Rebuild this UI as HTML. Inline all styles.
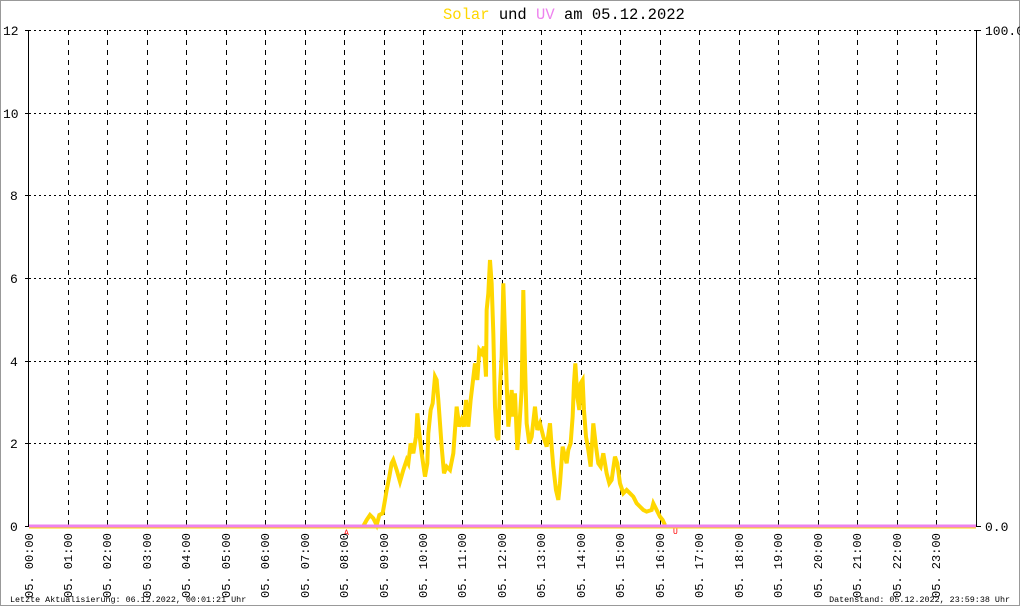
<!DOCTYPE html>
<html><head><meta charset="utf-8"><style>
html,body{margin:0;padding:0;background:#fff}
svg{display:block}
text{font-family:"Liberation Mono",monospace}
</style></head><body>
<svg width="1020" height="606" viewBox="0 0 1020 606" xmlns="http://www.w3.org/2000/svg">
<rect x="0.5" y="0.5" width="1019" height="605" fill="#fff" stroke="#999"/>
<text x="443" y="19" font-size="15.5" fill="#000"><tspan fill="#ffd700">Solar</tspan> und <tspan fill="#ee82ee">UV</tspan> am 05.12.2022</text>
<g stroke="#000" stroke-width="1" stroke-dasharray="2,3">
<line x1="29" x2="976" y1="30.5" y2="30.5"/>
<line x1="29" x2="976" y1="113.5" y2="113.5"/>
<line x1="29" x2="976" y1="195.5" y2="195.5"/>
<line x1="29" x2="976" y1="278.5" y2="278.5"/>
<line x1="29" x2="976" y1="361.5" y2="361.5"/>
<line x1="29" x2="976" y1="443.5" y2="443.5"/>
</g>
<g stroke="#000" stroke-width="1" stroke-dasharray="5,5" id="vg"></g>
<g stroke="#000" stroke-width="1" stroke-dasharray="5,5">
<line x1="68.5" x2="68.5" y1="30" y2="526"/><line x1="107.5" x2="107.5" y1="30" y2="526"/><line x1="147.5" x2="147.5" y1="30" y2="526"/><line x1="186.5" x2="186.5" y1="30" y2="526"/><line x1="226.5" x2="226.5" y1="30" y2="526"/><line x1="265.5" x2="265.5" y1="30" y2="526"/><line x1="305.5" x2="305.5" y1="30" y2="526"/><line x1="344.5" x2="344.5" y1="30" y2="526"/><line x1="384.5" x2="384.5" y1="30" y2="526"/><line x1="423.5" x2="423.5" y1="30" y2="526"/><line x1="462.5" x2="462.5" y1="30" y2="526"/><line x1="502.5" x2="502.5" y1="30" y2="526"/><line x1="541.5" x2="541.5" y1="30" y2="526"/><line x1="581.5" x2="581.5" y1="30" y2="526"/><line x1="620.5" x2="620.5" y1="30" y2="526"/><line x1="660.5" x2="660.5" y1="30" y2="526"/><line x1="699.5" x2="699.5" y1="30" y2="526"/><line x1="739.5" x2="739.5" y1="30" y2="526"/><line x1="778.5" x2="778.5" y1="30" y2="526"/><line x1="818.5" x2="818.5" y1="30" y2="526"/><line x1="857.5" x2="857.5" y1="30" y2="526"/><line x1="897.5" x2="897.5" y1="30" y2="526"/><line x1="936.5" x2="936.5" y1="30" y2="526"/>
</g>
<g stroke="#000" stroke-width="1">
<line x1="28.5" x2="28.5" y1="30" y2="527"/>
<line x1="976.5" x2="976.5" y1="30" y2="527"/>
<line x1="25" x2="29" y1="30.5" y2="30.5"/><line x1="25" x2="29" y1="113.5" y2="113.5"/><line x1="25" x2="29" y1="195.5" y2="195.5"/><line x1="25" x2="29" y1="278.5" y2="278.5"/><line x1="25" x2="29" y1="361.5" y2="361.5"/><line x1="25" x2="29" y1="443.5" y2="443.5"/><line x1="25" x2="29" y1="526.5" y2="526.5"/>
<line x1="976" x2="981" y1="30.5" y2="30.5"/><line x1="976" x2="981" y1="526.5" y2="526.5"/>
</g>
<g font-size="13" fill="#000">
<text x="3" y="35">12</text><text x="3" y="118">10</text><text x="10" y="200">8</text><text x="10" y="283">6</text><text x="10" y="366">4</text><text x="10" y="448">2</text><text x="10" y="531">0</text>
<text x="985" y="35">100.0</text><text x="985" y="531">0.0</text>
</g>
<g transform="translate(340,250) scale(0.3333)" fill="none" stroke="#ffd700" stroke-width="12" stroke-linejoin="miter">
<polyline points="70,828 80,810 90,795 100,805 110,825 118,795 128,790 135,750 140,720 148,680 155,640 160,630 170,660 180,695 190,660 200,630 205,640 212,580 220,610 228,560 232,490 238,550 245,610 255,680 262,640 265,550 272,480 278,460 285,380 290,390 295,450 300,520 305,590 312,670 320,650 330,660 340,610 350,470 358,530 365,510 372,530 378,450 385,530 392,450 398,400 405,340 412,390 418,300 425,310 432,290 438,380 440,180 445,130 450,30 455,100 460,250 465,470 470,560 475,570 480,410 485,320 490,100 495,250 500,400 505,530 510,480 515,420 520,500 525,430 532,600 538,530 545,420 550,120 555,340 560,520 568,580 575,560 585,470 592,540 600,520 610,560 620,590 630,520 635,590 640,650 648,720 655,750 660,700 668,590 675,620 680,640 685,600 692,580 698,500 702,400 706,340 712,440 718,480 722,400 728,390 732,480 738,560 745,600 752,650 760,520 768,590 775,640 782,650 790,610 800,670 808,700 815,690 825,620 832,640 840,700 850,730 860,720 870,730 880,740 890,760 900,770 910,780 920,785 935,780 940,760 950,780 960,800 968,810 975,825"/>
</g>
<line x1="29" x2="976" y1="528" y2="528" stroke="#ffd700" stroke-width="1"/>
<line x1="29" x2="976" y1="526" y2="526" stroke="#ee82ee" stroke-width="3"/>
<text x="344" y="535" font-size="8" fill="#f00">A</text>
<text x="673" y="534" font-size="8" fill="#f00">U</text>
<g font-size="12" fill="#000">
<text transform="translate(33,598) rotate(-90)">05. 00:00</text><text transform="translate(72,598) rotate(-90)">05. 01:00</text><text transform="translate(111,598) rotate(-90)">05. 02:00</text><text transform="translate(151,598) rotate(-90)">05. 03:00</text><text transform="translate(190,598) rotate(-90)">05. 04:00</text><text transform="translate(230,598) rotate(-90)">05. 05:00</text><text transform="translate(269,598) rotate(-90)">05. 06:00</text><text transform="translate(309,598) rotate(-90)">05. 07:00</text><text transform="translate(348,598) rotate(-90)">05. 08:00</text><text transform="translate(388,598) rotate(-90)">05. 09:00</text><text transform="translate(427,598) rotate(-90)">05. 10:00</text><text transform="translate(466,598) rotate(-90)">05. 11:00</text><text transform="translate(506,598) rotate(-90)">05. 12:00</text><text transform="translate(545,598) rotate(-90)">05. 13:00</text><text transform="translate(585,598) rotate(-90)">05. 14:00</text><text transform="translate(624,598) rotate(-90)">05. 15:00</text><text transform="translate(664,598) rotate(-90)">05. 16:00</text><text transform="translate(703,598) rotate(-90)">05. 17:00</text><text transform="translate(743,598) rotate(-90)">05. 18:00</text><text transform="translate(782,598) rotate(-90)">05. 19:00</text><text transform="translate(822,598) rotate(-90)">05. 20:00</text><text transform="translate(861,598) rotate(-90)">05. 21:00</text><text transform="translate(901,598) rotate(-90)">05. 22:00</text><text transform="translate(940,598) rotate(-90)">05. 23:00</text>
</g>
<text x="10" y="602" font-size="8.4" fill="#000">Letzte Aktualisierung: 06.12.2022, 00:01:21 Uhr</text>
<text x="1010" y="602" font-size="8.4" fill="#000" text-anchor="end">Datenstand: 05.12.2022, 23:59:38 Uhr</text>
</svg>
</body></html>
